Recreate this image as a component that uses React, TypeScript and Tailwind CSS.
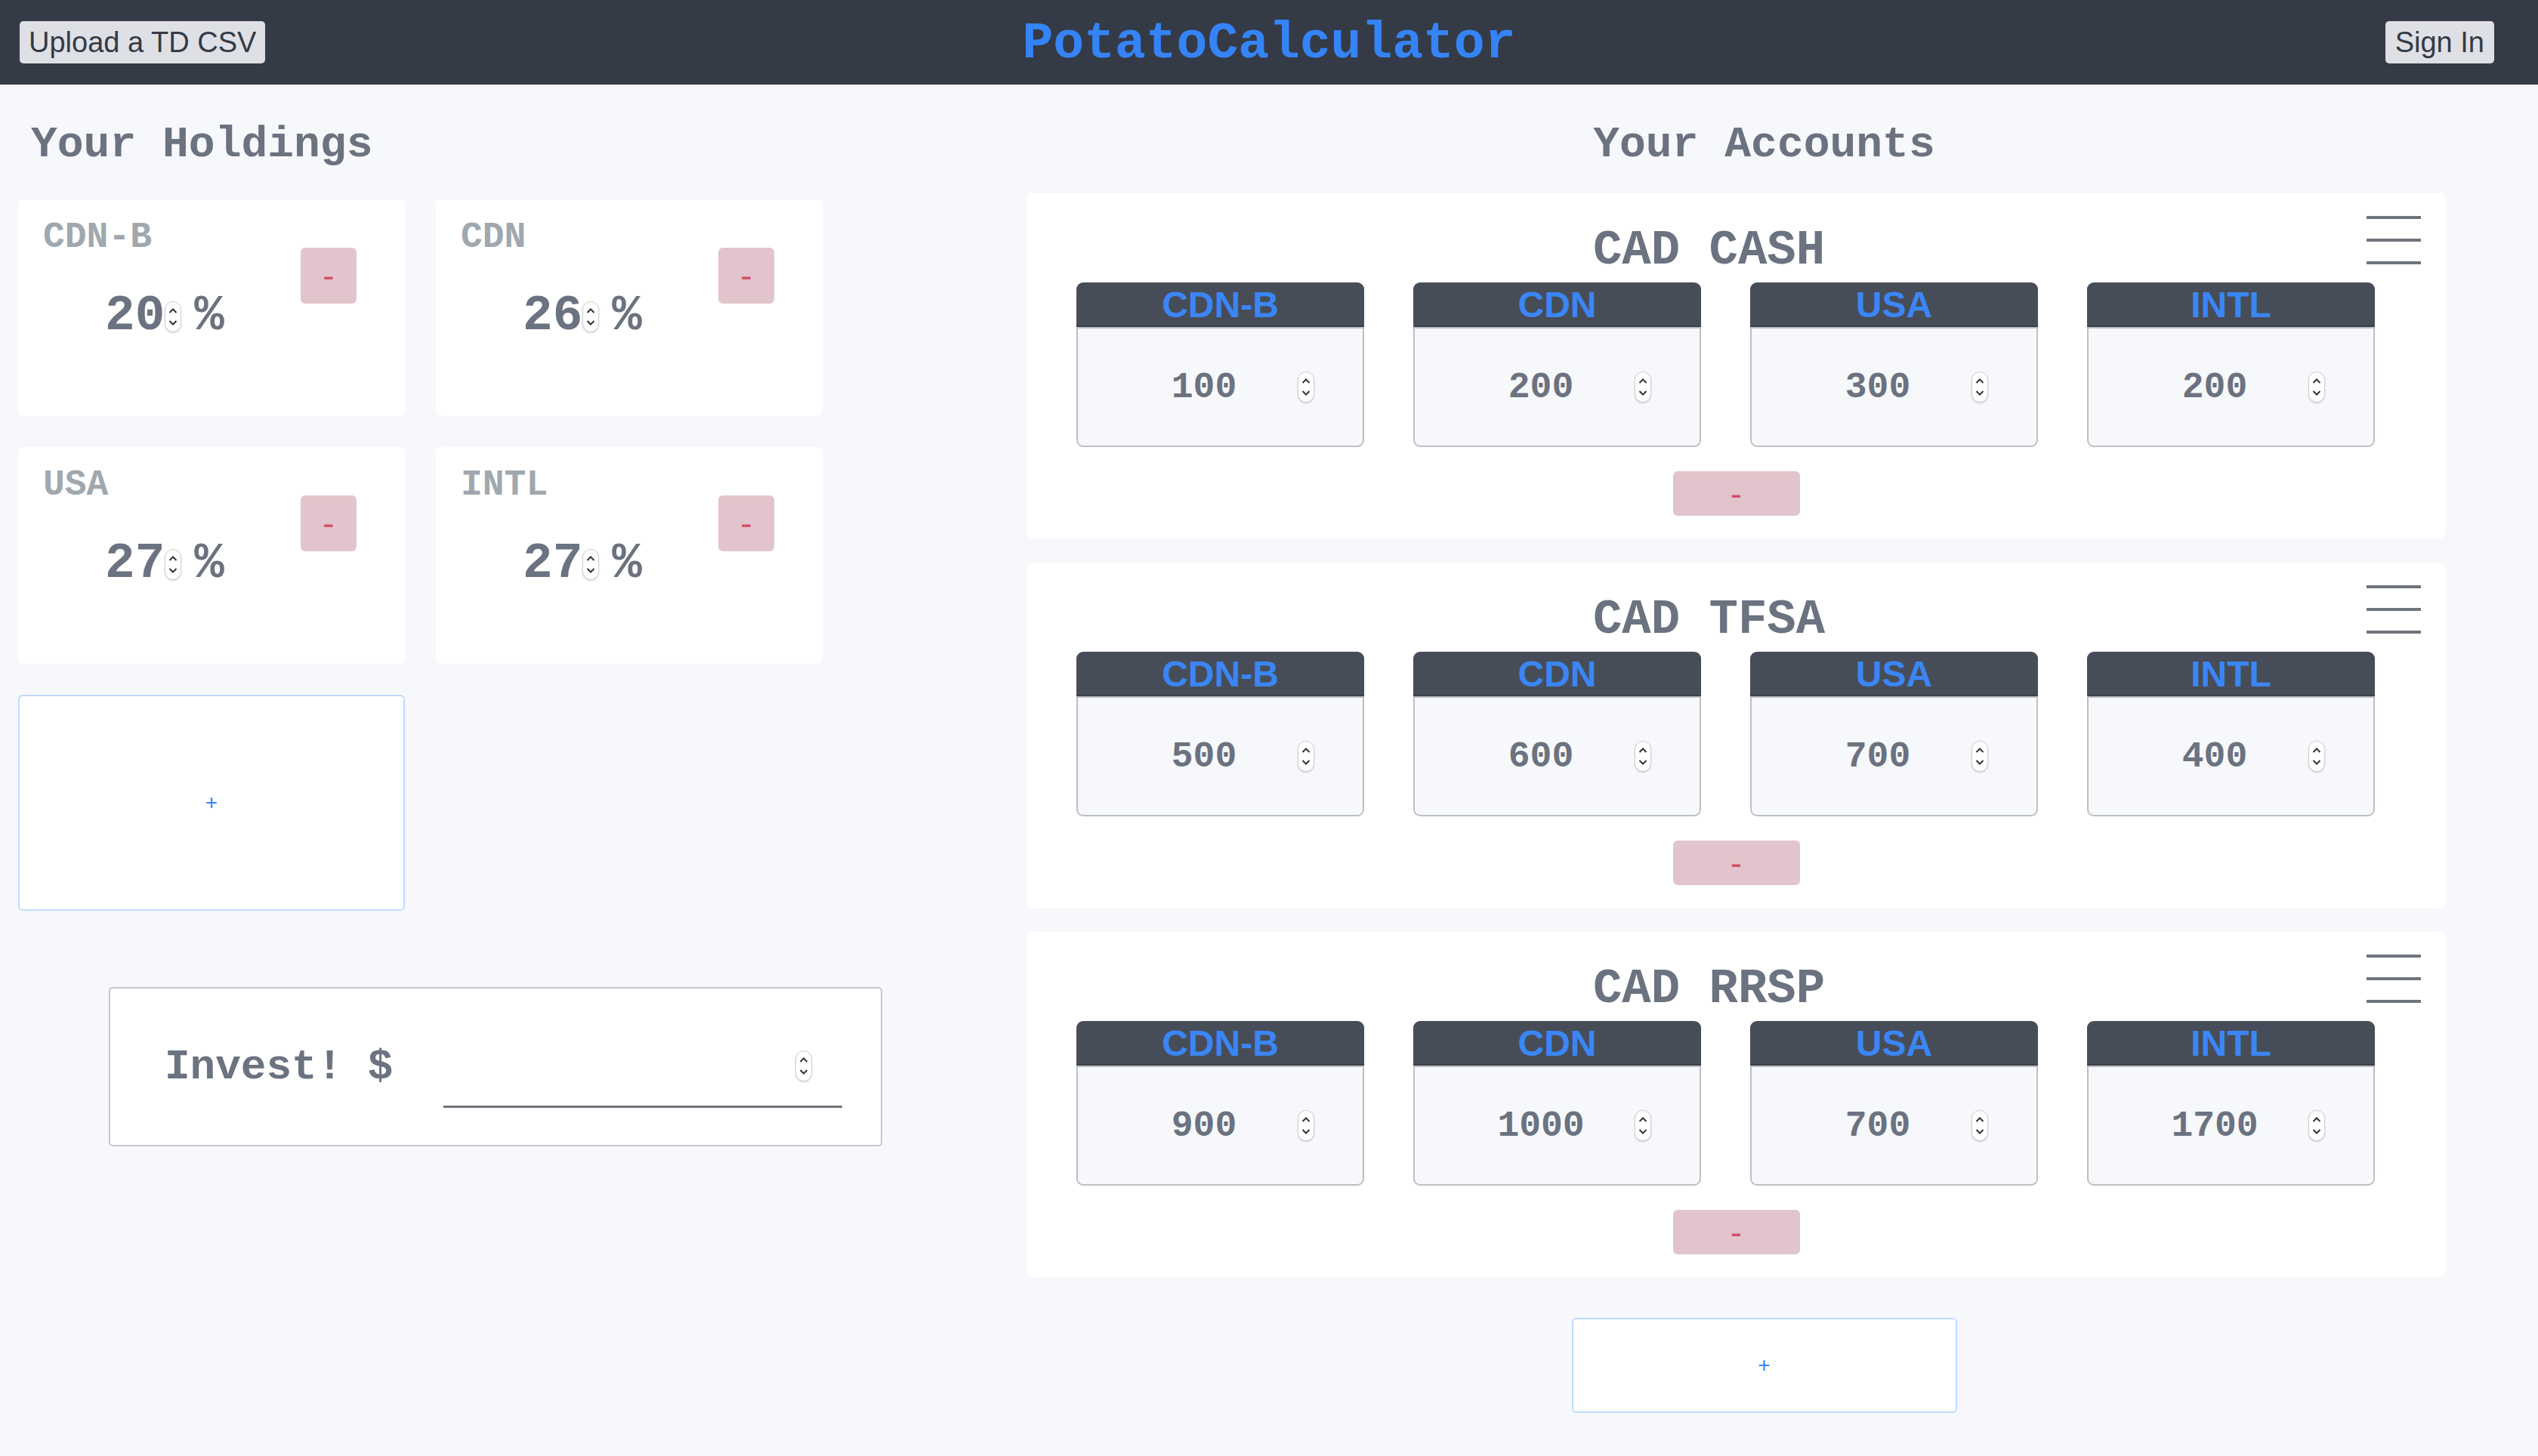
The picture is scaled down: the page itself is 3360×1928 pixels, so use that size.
import React from 'react';

const holdings = [
  { name: 'CDN-B', pct: 20 },
  { name: 'CDN', pct: 26 },
  { name: 'USA', pct: 27 },
  { name: 'INTL', pct: 27 },
];

const funds = ['CDN-B', 'CDN', 'USA', 'INTL'];

const accounts = [
  { name: 'CAD CASH', values: [100, 200, 300, 200] },
  { name: 'CAD TFSA', values: [500, 600, 700, 400] },
  { name: 'CAD RRSP', values: [900, 1000, 700, 1700] },
];

// number input spin buttons, drawn since headless chrome hides them
function Spinner() {
  return (
    <div className="flex h-[41px] w-[22px] shrink-0 flex-col items-center justify-center gap-[9px] rounded-full border border-[#d2d2d2] bg-white shadow-[0_1px_2px_rgba(0,0,0,0.18)]">
      <svg width="12" height="7" viewBox="0 0 12 7">
        <path d="M1.5 6L6 1.5L10.5 6" fill="none" stroke="#333" strokeWidth="2" />
      </svg>
      <svg width="12" height="7" viewBox="0 0 12 7">
        <path d="M1.5 1L6 5.5L10.5 1" fill="none" stroke="#333" strokeWidth="2" />
      </svg>
    </div>
  );
}

function MinusButton({ className }: { className: string }) {
  return (
    <button
      className={
        'flex shrink-0 items-center justify-center rounded-[6px] bg-[#e2c5cc] font-["Liberation_Sans",sans-serif] text-[46px] leading-none text-[#d6506b] ' +
        className
      }
    >
      -
    </button>
  );
}

function HoldingCard({ name, pct }: { name: string; pct: number }) {
  return (
    <div className="flex h-[287px] w-[512px] rounded-[8px] bg-white">
      <div className="flex flex-1 flex-col">
        <div className="mt-[26px] pl-[33px] text-[48px] font-bold leading-none text-[#9fa8ae]">{name}</div>
        <div className="mt-[48px] flex h-[66px] items-center justify-center pl-[14px] text-[66px] font-bold leading-none text-[#6b7280]">
          <span>{pct}</span>
          <Spinner />
          <span className="ml-[17px]">%</span>
        </div>
      </div>
      <MinusButton className="mt-[64px] mr-[64px] h-[74px] w-[74px]" />
    </div>
  );
}

function FundBox({ label, value }: { label: string; value: number }) {
  return (
    <div className="w-[381px] shrink-0">
      <div className="flex h-[59px] items-center justify-center rounded-t-[9px] border-b-2 border-[#3b4049] bg-[#474d58] pt-[2px] font-['Liberation_Sans',sans-serif] text-[48px] font-bold leading-none text-[#3b86f6]">
        {label}
      </div>
      <div className="flex h-[159px] items-center justify-center rounded-b-[9px] border-2 border-[#bcbfc4] bg-[#f7f8fb]">
        <div className="mr-[18px] flex w-[272px] items-center pr-[3px]">
          <span className="flex-1 text-center text-[48px] font-bold leading-none text-[#6b7280]">{value}</span>
          <Spinner />
        </div>
      </div>
    </div>
  );
}

function AccountCard({ name, values }: { name: string; values: number[] }) {
  return (
    <div className="w-[1879px] rounded-[8px] bg-white px-[33px] pt-[30px] pb-[30px]">
      <div className="flex items-start">
        <h3 className="mt-[14px] flex-1 text-center text-[64px] font-bold leading-none whitespace-pre text-[#6b7280]">{name}</h3>
        <div className="flex w-[72px] flex-col gap-[26px]">
          <div className="h-[4px] bg-[#6f747c]" />
          <div className="h-[4px] bg-[#6f747c]" />
          <div className="h-[4px] bg-[#6f747c]" />
        </div>
      </div>
      <div className="mt-[10px] flex gap-[65px] px-[33px]">
        {funds.map((f, i) => (
          <FundBox key={f} label={f} value={values[i]} />
        ))}
      </div>
      <div className="mt-[32px] flex justify-center">
        <MinusButton className="h-[59px] w-[168px]" />
      </div>
    </div>
  );
}

export default function App() {
  return (
    <div className="flex min-h-screen flex-col bg-[#f7f8fc] font-['Liberation_Mono',monospace]">
      {/* Header */}
      <header className="grid h-[112px] shrink-0 grid-cols-[1fr_auto_1fr] items-center bg-[#353a47] px-[26px]">
        <button className="h-[56px] justify-self-start rounded-[5px] bg-[#dfe0e5] px-[12px] font-['Liberation_Sans',sans-serif] text-[38px] leading-none text-[#343a46]">
          Upload a TD CSV
        </button>
        <h1 className="pt-[4px] text-[68px] font-bold leading-none text-[#3584f7]">PotatoCalculator</h1>
        <button className="mr-[32px] h-[56px] justify-self-end rounded-[5px] bg-[#dfe0e5] px-[13px] font-['Liberation_Sans',sans-serif] text-[38px] leading-none text-[#343a46]">
          Sign In
        </button>
      </header>

      <main className="flex pt-[51px]">
        {/* Holdings */}
        <section className="w-[1359px] shrink-0 pl-[24px]">
          <h2 className="pl-[17px] text-[58px] font-bold leading-none text-[#6b7280]">Your Holdings</h2>
          <div className="mt-[43px] grid grid-cols-[512px_512px] gap-[41px]">
            {holdings.map((h) => (
              <HoldingCard key={h.name} name={h.name} pct={h.pct} />
            ))}
            <button className="flex h-[286px] w-[512px] items-center justify-center rounded-[6px] border-2 border-[#bfdbfe] bg-white font-['Liberation_Sans',sans-serif] text-[28px] leading-none text-[#3b82f6]">
              +
            </button>
          </div>
          <div className="mt-[101px] ml-[120px] flex h-[211px] w-[1024px] items-center rounded-[5px] border-2 border-[#c6c7ca] bg-white pl-[72px]">
            <span className="text-[56px] font-bold leading-none whitespace-pre text-[#6b7280]">Invest! $</span>
            <div className="ml-[67px] flex h-[108px] w-[528px] items-center justify-end border-b-[3px] border-[#6f747c] pr-[40px]">
              <Spinner />
            </div>
          </div>
        </section>

        {/* Accounts */}
        <section className="flex w-[1953px] shrink-0 flex-col">
          <h2 className="text-center text-[58px] font-bold leading-none text-[#6b7280]">Your Accounts</h2>
          <div className="mt-[35px] flex flex-col gap-[32px]">
            {accounts.map((a) => (
              <AccountCard key={a.name} name={a.name} values={a.values} />
            ))}
          </div>
          <button className="mt-[54px] flex h-[126px] w-[510px] items-center justify-center self-center rounded-[6px] border-2 border-[#bfdbfe] bg-white font-['Liberation_Sans',sans-serif] text-[28px] leading-none text-[#3b82f6]">
            +
          </button>
        </section>
      </main>
    </div>
  );
}
